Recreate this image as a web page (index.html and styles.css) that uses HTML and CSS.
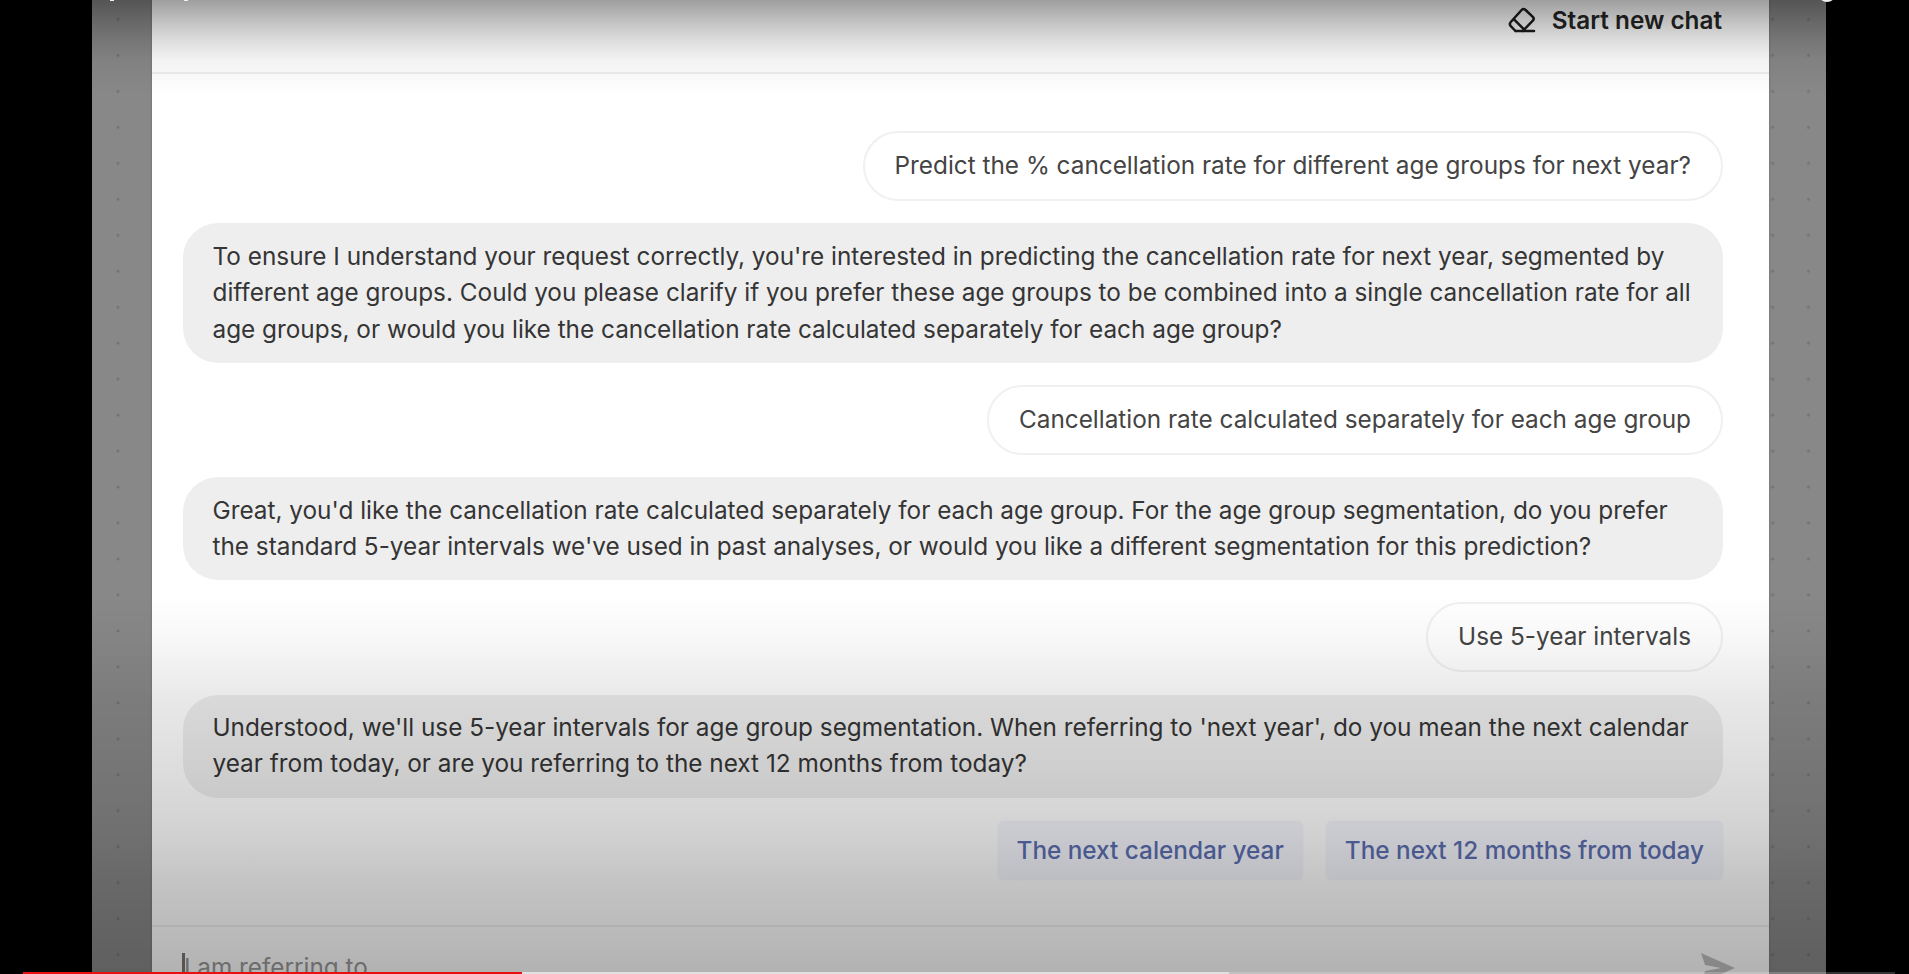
FILE: index.html
```html
<!DOCTYPE html>
<html lang="en">
<head>
    <meta charset="UTF-8">
    <meta name="viewport" content="width=device-width, initial-scale=1.0">
    <title>Chat</title>
    <link rel="stylesheet" href="styles.css">
</head>
<body>
    <div class="player">
        <div class="stage">
            <div class="chat">
                <div class="header">
                    <button class="newChat">
                        <svg class="eraser" viewBox="0 0 28 26" fill="none" stroke="#1c1c1c" stroke-width="2.5" stroke-linecap="round" stroke-linejoin="round">
                            <path d="M7.5 24 L2.8 19.2 Q0.9 17 2.8 15 L13.6 3 Q15.5 1 17.6 3 L24.8 9.8 Q26.6 11.6 24.8 13.6 L14.8 24"/>
                            <path d="M6 12.4 L16 22.4"/>
                            <path d="M7.5 24 H26"/>
                        </svg>
                        <span>Start new chat</span>
                    </button>
                </div>
                <div class="messages">
                    <div class="message user">Predict the % cancellation rate for different age groups for next year?</div>
                    <div class="message bot">To ensure I understand your request correctly, you're interested in predicting the cancellation rate for next year, segmented by<br>different age groups. Could you please clarify if you prefer these age groups to be combined into a single cancellation rate for all<br>age groups, or would you like the cancellation rate calculated separately for each age group?</div>
                    <div class="message user">Cancellation rate calculated separately for each age group</div>
                    <div class="message bot">Great, you'd like the cancellation rate calculated separately for each age group. For the age group segmentation, do you prefer<br>the standard 5-year intervals we've used in past analyses, or would you like a different segmentation for this prediction?</div>
                    <div class="message user">Use 5-year intervals</div>
                    <div class="message bot">Understood, we'll use 5-year intervals for age group segmentation. When referring to 'next year', do you mean the next calendar<br>year from today, or are you referring to the next 12 months from today?</div>
                    <div class="options">
                        <button class="option">The next calendar year</button>
                        <button class="option">The next 12 months from today</button>
                    </div>
                </div>
                <div class="prompt">
                    <span class="caret"></span>
                    <span class="placeholder">I am referring to</span>
                    <svg class="send" viewBox="0 0 34 30">
                        <path fill="#c0c0c0" d="M0 0 L34 15 L0 30 L4 18 L20 15 L4 12 Z"/>
                    </svg>
                </div>
            </div>
        </div>
        <div class="shade"></div>
        <div class="titleBits">
            <i class="descender first"></i>
            <i class="descender second"></i>
            <i class="roundBtn"></i>
        </div>
        <div class="progress">
            <div class="played"></div>
            <div class="loaded"></div>
        </div>
    </div>
</body>
</html>
```

FILE: styles.css
```css
* {
    box-sizing: border-box;
}
body {
    margin: 0;
    background-color: #000;
    font-family: 'Inter', sans-serif;
}
button {
    border: none;
    font-family: inherit;
}
.player {
    position: relative;
    height: 974px;
    padding: 0 83px 0 92px;
    overflow: hidden;
}
.stage {
    height: 974px;
    padding: 0 57px 0 60px;
    background-color: #888;
    background-image: radial-gradient(circle, #747474 1px, transparent 2px);
    background-size: 35.97px 35.97px;
    background-position: 8px 1.5px;
}
.chat {
    display: flex;
    flex-direction: column;
    height: 974px;
    background: #fff;
    box-shadow: 0 0 2px #666;
}
.header {
    display: flex;
    justify-content: flex-end;
    height: 74px;
    padding-right: 47px;
    border-bottom: 2px solid #efefef;
}
.newChat {
    display: flex;
    align-items: center;
    gap: 16px;
    height: 40px;
    padding: 0;
    background: none;
    color: #262626;
    font-size: 24.3px;
    font-weight: 600;
    white-space: nowrap;
}
.eraser {
    width: 28px;
    height: 26px;
}
.messages {
    display: flex;
    flex-direction: column;
    gap: 22.1px;
    height: 851px;
    padding: 57.2px 46px 0 30.5px;
}
.message {
    font-size: 24.33px;
    line-height: 36.5px;
    color: #353535;
    white-space: nowrap;
}
.user {
    align-self: flex-end;
    height: 70px;
    padding: 14px 30px;
    border: 2px solid #f0f0f0;
    border-radius: 35px;
    color: #444;
}
.bot {
    padding: 14.4px 30px 15.8px;
    background: #eee;
    border-radius: 35px;
}
.options {
    display: flex;
    justify-content: flex-end;
    gap: 23px;
    padding-top: 1px;
}
.option {
    height: 59px;
    padding: 0 19px;
    background: #f5f6fd;
    border-radius: 6px;
    box-shadow: 0 0 3px #f5f6fd;
    color: #5b6eb0;
    font-size: 24.3px;
    font-weight: 500;
    white-space: nowrap;
}
.prompt {
    display: flex;
    align-items: flex-start;
    height: 49px;
    padding: 26px 34px 0 30px;
    border-top: 2px solid #f0f0f0;
    overflow: hidden;
}
.caret {
    width: 3px;
    height: 30px;
    margin-right: -1px;
    background: #777;
}
.placeholder {
    margin-top: -1px;
    font-size: 24.3px;
    line-height: 30px;
    color: #999;
    white-space: nowrap;
}
.send {
    width: 34px;
    height: 30px;
    margin-left: auto;
}
/* dark gradients of the player controls, over the video */
.shade {
    position: absolute;
    inset: 0;
    background:
        linear-gradient(to bottom, rgba(0,0,0,.38) 0, rgba(0,0,0,.25) 20px, rgba(0,0,0,.135) 40px, rgba(0,0,0,.05) 60px, transparent 95px),
        linear-gradient(to bottom, transparent 595px, rgba(0,0,0,.03) 640px, rgba(0,0,0,.09) 700px, rgba(0,0,0,.14) 780px, rgba(0,0,0,.18) 835px, rgba(0,0,0,.23) 880px, rgba(0,0,0,.265) 925px, rgba(0,0,0,.3) 974px);
}
.titleBits i {
    position: absolute;
    background: #f0f0f0;
}
.titleBits .descender {
    top: 0;
    width: 4px;
    height: 1px;
}
.titleBits .first {
    left: 110px;
}
.titleBits .second {
    left: 184px;
}
.titleBits .roundBtn {
    top: -14px;
    left: 1818px;
    width: 18px;
    height: 16px;
    border-radius: 0 0 9px 9px;
}
.progress {
    position: absolute;
    left: 23px;
    right: 14px;
    bottom: 0;
    display: flex;
    height: 2px;
    background: rgba(255,255,255,.2);
}
.played {
    width: 499px;
    background: #e81010;
}
.loaded {
    width: 707px;
    background: rgba(255,255,255,.5);
}
```
